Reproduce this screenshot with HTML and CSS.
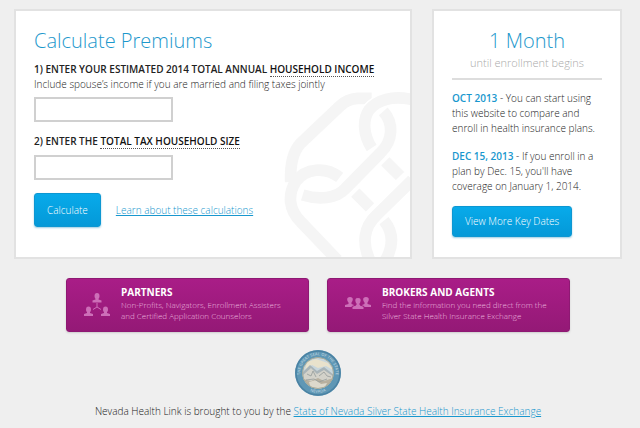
FILE: index.html
```html
<!DOCTYPE html>
<html lang="en">
<head>
<meta charset="utf-8">
<title>Nevada Health Link</title>
<link rel="stylesheet" href="styles.css">
</head>
<body>
<main class="panels">
  <section class="card calculator">
    <svg class="knot" viewBox="39 30 384 501" aria-hidden="true">
      <path d="M308 55H265Q235 57 213 78L95 190Q62 225 65 306"/>
      <path d="M212 292C170 260 110 263 80 305C55 345 60 390 95 425L205 540"/>
      <path class="gap" d="M135 351C180 357 210 348 230 325L335 218"/>
      <path d="M101 345C150 360 202 356 230 325L335 218C372 182 375 130 343 94"/>
      <path class="gap" d="M423 57C370 45 325 60 300 90"/>
      <path d="M430 59C370 45 325 60 300 90C280 120 283 165 308 204"/>
      <path d="M349 244L393 288M259 338L303 382"/>
      <path d="M345 422C372 455 375 495 350 540"/>
      <path class="gap" d="M430 300L322 406"/>
      <path d="M430 300L322 406C285 440 278 490 302 540"/>
    </svg>
    <h1>Calculate Premiums</h1>
    <form class="form">
      <label class="question" for="income">1) ENTER YOUR ESTIMATED 2014 TOTAL ANNUAL <span class="term">HOUSEHOLD INCOME</span></label>
      <p class="hint">Include spouse’s income if you are married and filing taxes jointly</p>
      <input class="field" id="income" type="text">
      <label class="question second" for="size">2) ENTER THE <span class="term">TOTAL TAX HOUSEHOLD SIZE</span></label>
      <input class="field" id="size" type="text">
      <div class="actions">
        <button class="button" type="button">Calculate</button>
        <a href="#">Learn about these calculations</a>
      </div>
    </form>
  </section>
  <section class="card dates">
    <h2>1 Month</h2>
    <p class="until">until enrollment begins</p>
    <p class="event"><strong>OCT 2013</strong> - You can start using this website to compare and enroll in health insurance plans.</p>
    <p class="event"><strong>DEC 15, 2013</strong> - If you enroll in a plan by Dec. 15, you'll have coverage on January 1, 2014.</p>
    <button class="button wide" type="button">View More Key Dates</button>
  </section>
</main>
<nav class="links">
  <a class="banner" href="#">
    <svg class="icon" viewBox="0 0 26 26" aria-hidden="true">
      <g id="person"><ellipse cx="13" cy="4" rx="2.500" ry="3"/><path d="M11.500 6h3v1.500l3 1v2h-9v-2l3-1z"/></g>
      <use href="#person" x="-8.500" y="13.500"/><use href="#person" x="8.500" y="13.500"/>
      <path class="line" d="M13 11v4M13 15l-4 2.500M13 15l4 2.500"/>
    </svg>
    <span class="copy"><strong>PARTNERS</strong><span>Non-Profits, Navigators, Enrollment Assisters<br>and Certified Application Counselors</span></span>
  </a>
  <a class="banner" href="#">
    <svg class="icon" viewBox="0 0 26 26" aria-hidden="true">
      <path d="M5 5c4 0 3 4 1.500 5.500v1.500l2.500 1v2H0v-2l3.500-1v-1.500C2 9 1 5 5 5zM21 5c4 0 3 4 1.500 5.500v1.500l3.500 1v2h-9v-2l2.500-1v-1.500C18 9 17 5 21 5z"/>
      <path class="front" d="M13 5.500c4 0 3.500 4 2 6v1.500l4 1.500v3H7v-3l4-1.500v-1.500C9.500 9.500 9 5.500 13 5.500z"/>
    </svg>
    <span class="copy"><strong>BROKERS AND AGENTS</strong><span>Find the information you need direct from the<br>Silver State Health Insurance Exchange</span></span>
  </a>
</nav>
<footer class="footer">
  <svg class="seal" viewBox="0 0 48 48" role="img" aria-label="Seal of the State of Nevada">
    <defs>
      <clipPath id="view"><circle cx="24" cy="24" r="15.500"/></clipPath>
      <path id="ring" d="M10.500 35.500A17.700 17.700 0 1 1 37.500 35.500"/>
      <path id="base" d="M10 38A19.800 19.800 0 0 0 38 38"/>
    </defs>
    <circle cx="24" cy="24" r="23" fill="#5f97b5"/>
    <circle cx="24" cy="24" r="22" fill="none" stroke="#4a82a3" stroke-width="1.500"/>
    <text><textPath href="#ring" startOffset="50%">THE GREAT SEAL OF THE STATE</textPath></text>
    <text><textPath href="#base" startOffset="50%">NEVADA</textPath></text>
    <g clip-path="url(#view)">
      <path fill="#c8d6dc" d="M8 8h32v32H8z"/>
      <path fill="#e9e2cc" d="M13 13l9-3 12 4 5 7-7-4-8 2-6-3-7 5z"/>
      <path fill="#a9b4b8" d="M8 24l8-8 7 6 7-4 10 8v6H8z"/>
      <path fill="#d3d2ca" d="M8 27l9-8 6 6 7-4 10 7v12H8z"/>
      <path fill="#b8b09f" d="M9 30l8 2 7-3 6 3 9-3-3 9H13z"/>
      <path fill="#ddd9cc" d="M15 33l7-2 5 4 6-1-3 6H17z"/>
      <path fill="none" stroke="#959c9b" stroke-width=".800" d="M13 25l4 2 2-5 3 6M25 27l5-4 3 4 4 1M12 31l8-1 5 3 8-3"/>
    </g>
    <circle cx="24" cy="24" r="15.500" fill="none" stroke="#a8aa98" stroke-width="1"/>
  </svg>
  <p>Nevada Health Link is brought to you by the <a href="#">State of Nevada Silver State Health Insurance Exchange</a></p>
</footer>
</body>
</html>
```
FILE: styles.css
```css
* { box-sizing: border-box; }
body {
  margin: 0;
  padding: 9px 18px 0 14px;
  background: #efefef;
  color: #222;
  font: 300 10px/15px "Open Sans", "Liberation Sans", sans-serif;
}
h1, h2, p { margin: 0; }
a { color: #1897ce; }
.panels { display: grid; grid-template-columns: minmax(0, 1fr) 190px; gap: 20px; }
.card {
  position: relative;
  padding: 17px 18px 20px;
  border: 2px solid #e2e2e2;
  background: #fff;
}
h1, h2 { color: #1d98cc; font-size: 20px; line-height: 26px; font-weight: 300; }
.knot {
  position: absolute;
  right: 0;
  bottom: 0;
  width: 128px;
  height: 167px;
  fill: none;
  stroke: #f5f5f5;
  stroke-width: 35px;
}
.knot .gap { stroke: #fff; stroke-width: 44px; }
.form { position: relative; }
.question { display: block; margin-top: 8px; font-weight: 600; line-height: 15px; }
.second { margin-top: 12px; }
.term { color: #111; border-bottom: 1px dotted #555; }
.hint { line-height: 14px; }
.field {
  display: block;
  width: 139px;
  height: 25px;
  margin-top: 6px;
  border: 2px solid #d0d0d0;
  background: #fff;
  font: inherit;
}
.actions { display: flex; align-items: center; gap: 15px; margin-top: 13px; }
.button {
  height: 34px;
  padding: 0 12px;
  border: 1px solid #0d97d2;
  border-radius: 3px;
  background: linear-gradient(#08aaea, #0499d8);
  box-shadow: 0 1px 2px #9ccde3;
  color: #fff;
  font: 300 10px/15px "Open Sans", "Liberation Sans", sans-serif;
}
.dates h2, .until { text-align: center; }
.until {
  padding-bottom: 7px;
  border-bottom: 2px solid #ddd;
  margin-bottom: 11px;
  color: #aaa;
  font-size: 11px;
  line-height: 17px;
}
.event { margin-bottom: 13px; }
.event strong { color: #1897ce; font-weight: 600; }
.wide { height: 31px; margin-top: -1px; }
.links { display: flex; justify-content: center; gap: 18px; margin-top: 19px; }
.banner {
  display: flex;
  flex: 0 1 243px;
  gap: 11px;
  padding: 7px 10px 10px 17px;
  border: 1px solid #8e1973;
  border-radius: 3px;
  background: linear-gradient(#a91d87, #941976);
  box-shadow: 0 1px 2px #ccc;
  color: #eab8df;
  font-size: 8px;
  line-height: 11px;
  text-decoration: none;
  white-space: nowrap;
}
.banner strong { display: block; color: #fff; font-size: 10px; line-height: 13px; font-weight: 700; }
.icon { flex: none; width: 26px; height: 26px; margin-top: 6px; fill: #cd6fb8; }
.line { stroke: #cd6fb8; stroke-width: 1px; }
.front { stroke: #a01b80; stroke-width: 1px; }
.footer { padding-top: 17px; text-align: center; }
.seal { display: block; width: 48px; height: 48px; margin: 0 auto 7px; }
.seal text { fill: #b3cddb; font-size: 4px; font-weight: 600; text-anchor: middle; }
```
